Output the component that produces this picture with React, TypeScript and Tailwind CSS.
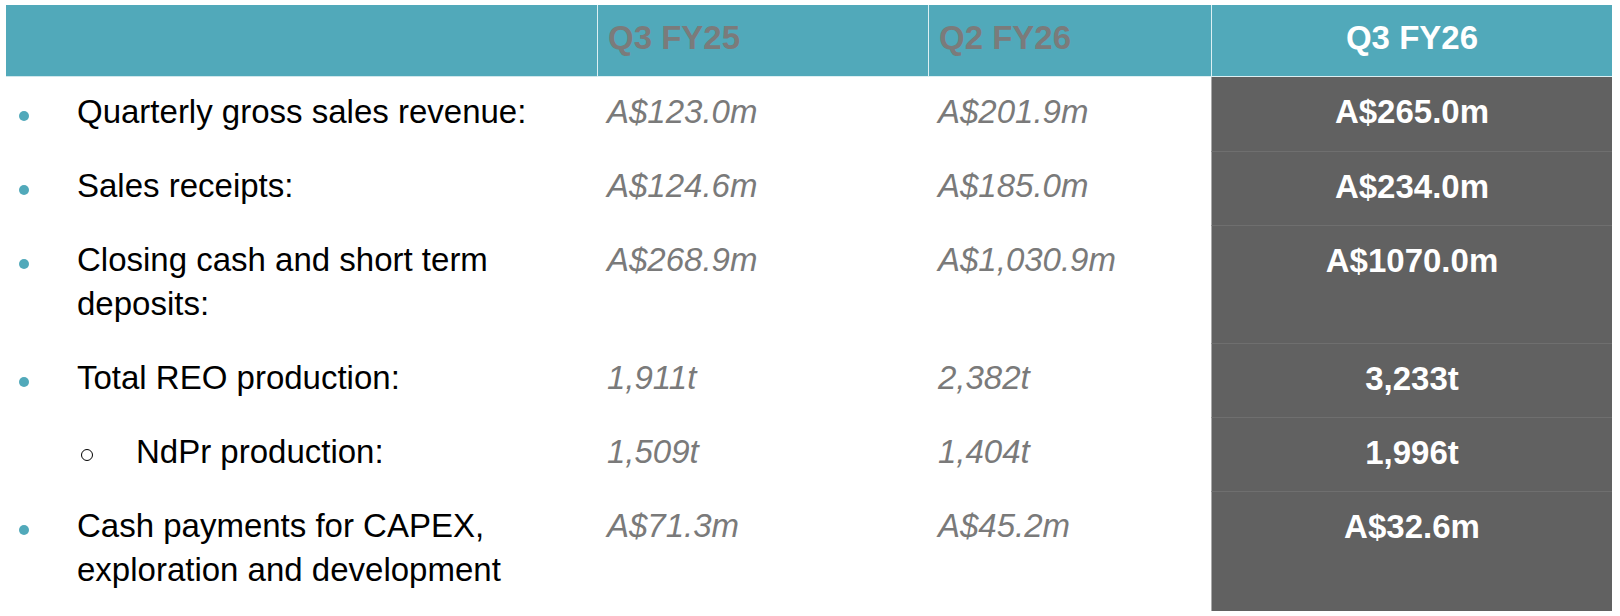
import * as React from 'react';

interface IRow {
  label: string;
  sub?: boolean;
  q3fy25: string;
  q2fy26: string;
  q3fy26: string;
}

const rows: IRow[] = [
  { label: 'Quarterly gross sales revenue:', q3fy25: 'A$123.0m', q2fy26: 'A$201.9m', q3fy26: 'A$265.0m' },
  { label: 'Sales receipts:', q3fy25: 'A$124.6m', q2fy26: 'A$185.0m', q3fy26: 'A$234.0m' },
  { label: 'Closing cash and short term deposits:', q3fy25: 'A$268.9m', q2fy26: 'A$1,030.9m', q3fy26: 'A$1070.0m' },
  { label: 'Total REO production:', q3fy25: '1,911t', q2fy26: '2,382t', q3fy26: '3,233t' },
  { label: 'NdPr production:', sub: true, q3fy25: '1,509t', q2fy26: '1,404t', q3fy26: '1,996t' },
  { label: 'Cash payments for CAPEX, exploration and development', q3fy25: 'A$71.3m', q2fy26: 'A$45.2m', q3fy26: 'A$32.6m' },
];

const font = { fontFamily: '"Liberation Sans", Arial, sans-serif' };

export default function App() {
  return (
    <div className="w-[1620px] h-[616px] bg-white pt-[5px] pl-[6px]" style={font}>
      <div className="grid grid-cols-[591px_331px_283px_401px] text-[33px] leading-[44px]">
        {/* header */}
        <div className="bg-[#51a9ba] h-[72px] border-b border-[#cfe7ec]" />
        <div className="bg-[#51a9ba] h-[72px] border-b border-l border-[#dcf0f3] pl-[10px] pt-[11px] font-bold text-[#7b7b7b]">Q3 FY25</div>
        <div className="bg-[#51a9ba] h-[72px] border-b border-l border-[#dcf0f3] pl-[10px] pt-[11px] font-bold text-[#7b7b7b]">Q2 FY26</div>
        <div className="bg-[#51a9ba] h-[72px] border-b border-l border-[#dcf0f3] pt-[11px] text-center font-bold text-white">Q3 FY26</div>

        {rows.map((row, i) => (
          <React.Fragment key={row.label}>
            <div className={`flex pt-[13px] ${i === rows.length - 1 ? 'pb-[19px]' : 'pb-[17px]'}`}>
              {row.sub ? (
                <div className="flex h-[44px] w-[130px] shrink-0 items-center pl-[75px] pt-[6px]">
                  <span className="block h-[12px] w-[12px] rounded-full border-[1.5px] border-black" />
                </div>
              ) : (
                <div className="flex h-[44px] w-[71px] shrink-0 items-center pl-[13px] pt-[7px]">
                  <span className="block h-[10px] w-[10px] rounded-full bg-[#51a9ba]" />
                </div>
              )}
              <div className="w-[490px] text-black">{row.label}</div>
            </div>
            <div className="pl-[10px] pt-[13px] italic text-[#7a7a7a]">{row.q3fy25}</div>
            <div className="pl-[10px] pt-[13px] italic text-[#7a7a7a]">{row.q2fy26}</div>
            <div className={`bg-[#616161] border-l border-[#a9a9a9] pt-[13px] text-center font-bold text-white ${i > 0 ? 'border-t border-t-[#6f6f6f]' : ''}`}>
              {row.q3fy26}
            </div>
          </React.Fragment>
        ))}
      </div>
    </div>
  );
}
